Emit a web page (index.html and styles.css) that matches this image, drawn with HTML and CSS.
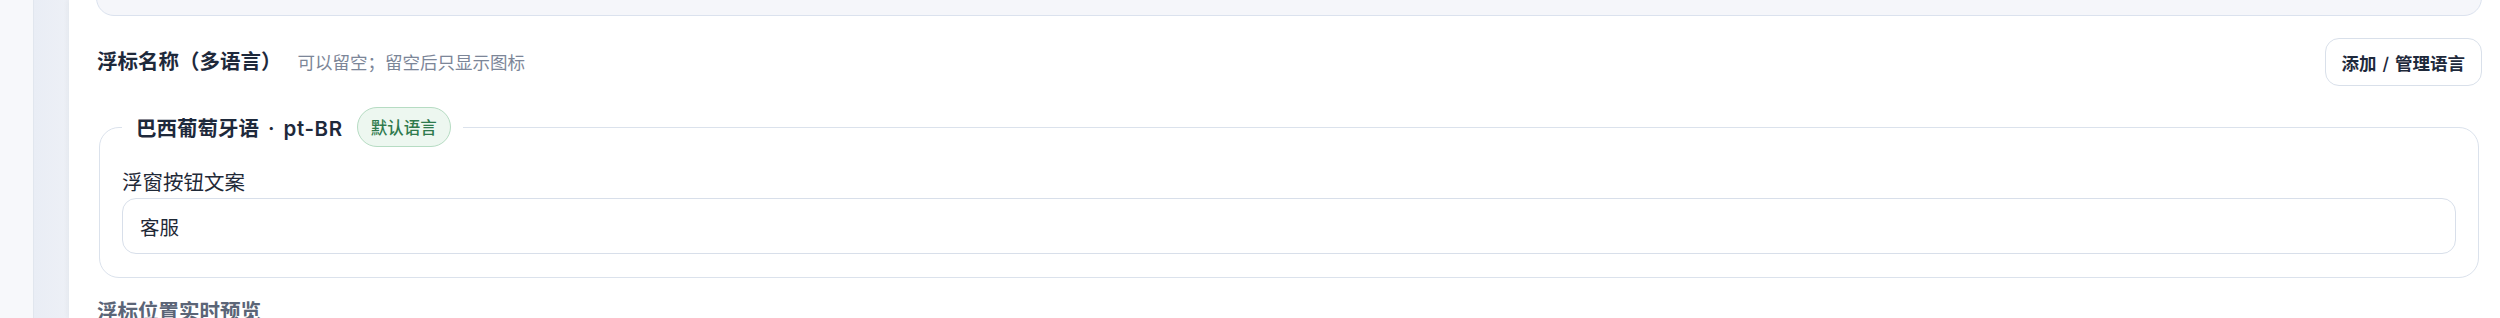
FILE: index.html
```html
<!DOCTYPE html>
<html lang="zh-CN">
<head>
<meta charset="utf-8">
<title>浮标名称</title>
<link rel="stylesheet" href="styles.css">
</head>
<body>
  <div class="rail"></div>
  <div class="sidebar"></div>
  <main class="panel">
    <div class="prev-card"></div>
    <div class="section-head">
      <div class="titles">
        <h3 class="title">浮标名称（多语言）</h3>
        <span class="hint">可以留空；留空后只显示图标</span>
      </div>
      <button class="btn" type="button">添加<span class="sep">/</span>管理语言</button>
    </div>
    <fieldset class="lang-box">
      <legend class="lang-legend">
        <span class="lang-name">巴西葡萄牙语<span class="dot">·</span><span class="code">pt-BR</span></span>
        <span class="badge">默认语言</span>
      </legend>
      <label class="field-label" for="fab-text">浮窗按钮文案</label>
      <div class="input"><span id="fab-text">客服</span></div>
    </fieldset>
    <div class="next-title">浮标位置实时预览</div>
  </main>
</body>
</html>
```

FILE: styles.css
```css
* { box-sizing: border-box; }

html, body {
  margin: 0;
  height: 318px;
  overflow: hidden;
}

body {
  display: flex;
  background: #ffffff;
  font-family: "Inter", "Noto Sans CJK SC", sans-serif;
  color: #1e293b;
}

.rail {
  width: 34px;
  flex: none;
  background: #f7f8fb;
  border-right: 1px solid #e1e6ee;
}

.sidebar {
  width: 35px;
  flex: none;
  background: linear-gradient(90deg, #e9edf5, #edf0f6);
}

.panel {
  flex: 1;
  min-width: 0;
  background: #ffffff;
  padding: 0 18px 0 27px;
  box-shadow: -2px 0 4px rgba(30, 41, 59, 0.04);
}

.prev-card {
  height: 60px;
  margin-top: -44px;
  background: #f5f6fa;
  border: 1px solid #dbe2ee;
  border-radius: 18px;
}

.section-head {
  display: flex;
  align-items: center;
  justify-content: space-between;
  margin-top: 22px;
  height: 48px;
}

.titles {
  display: flex;
  align-items: baseline;
  gap: 16px;
  padding-left: 1px;
}

.title {
  margin: 0;
  font-size: 20.5px;
  font-weight: 700;
  color: #1e293b;
  line-height: 28px;
}

.hint {
  font-size: 17.5px;
  color: #7c8698;
  font-weight: 400;
}

.btn {
  height: 48px;
  padding: 0 16px;
  border: 1px solid #d9e0ea;
  border-radius: 14px;
  background: #ffffff;
  font-family: inherit;
  font-size: 17.5px;
  font-weight: 700;
  color: #1e293b;
}

.sep {
  margin: 0 6px;
  font-weight: 500;
}

.lang-box {
  margin: 21px 3px 0 3px;
  padding: 21px 22px 23px 22px;
  border: 1px solid #dbe2ec;
  border-radius: 20px;
  min-width: 0;
}

.lang-legend {
  display: flex;
  align-items: center;
  gap: 14px;
  padding: 0 12px 0 14px;
  height: 40px;
}

.lang-name {
  font-size: 20.5px;
  font-weight: 600;
  color: #1e293b;
}

.dot {
  margin: 0 9px;
}

.code {
  letter-spacing: 0.6px;
}

.badge {
  display: inline-flex;
  align-items: center;
  height: 40px;
  padding: 0 13px;
  border: 1px solid #b6dcc3;
  border-radius: 20px;
  background: #edf7f0;
  color: #2f7a4d;
  font-size: 16.5px;
  font-weight: 500;
}

.field-label {
  display: block;
  font-size: 20.5px;
  line-height: 30px;
  color: #1f2937;
}

.input {
  height: 56px;
  border: 1px solid #d8dfea;
  border-radius: 14px;
  padding: 0 17px;
  display: flex;
  align-items: center;
  font-size: 19.5px;
  color: #1f2937;
}

.next-title {
  margin-top: 20px;
  padding-left: 1px;
  font-size: 20.5px;
  line-height: 28px;
  font-weight: 600;
  color: #5b6577;
}
```
